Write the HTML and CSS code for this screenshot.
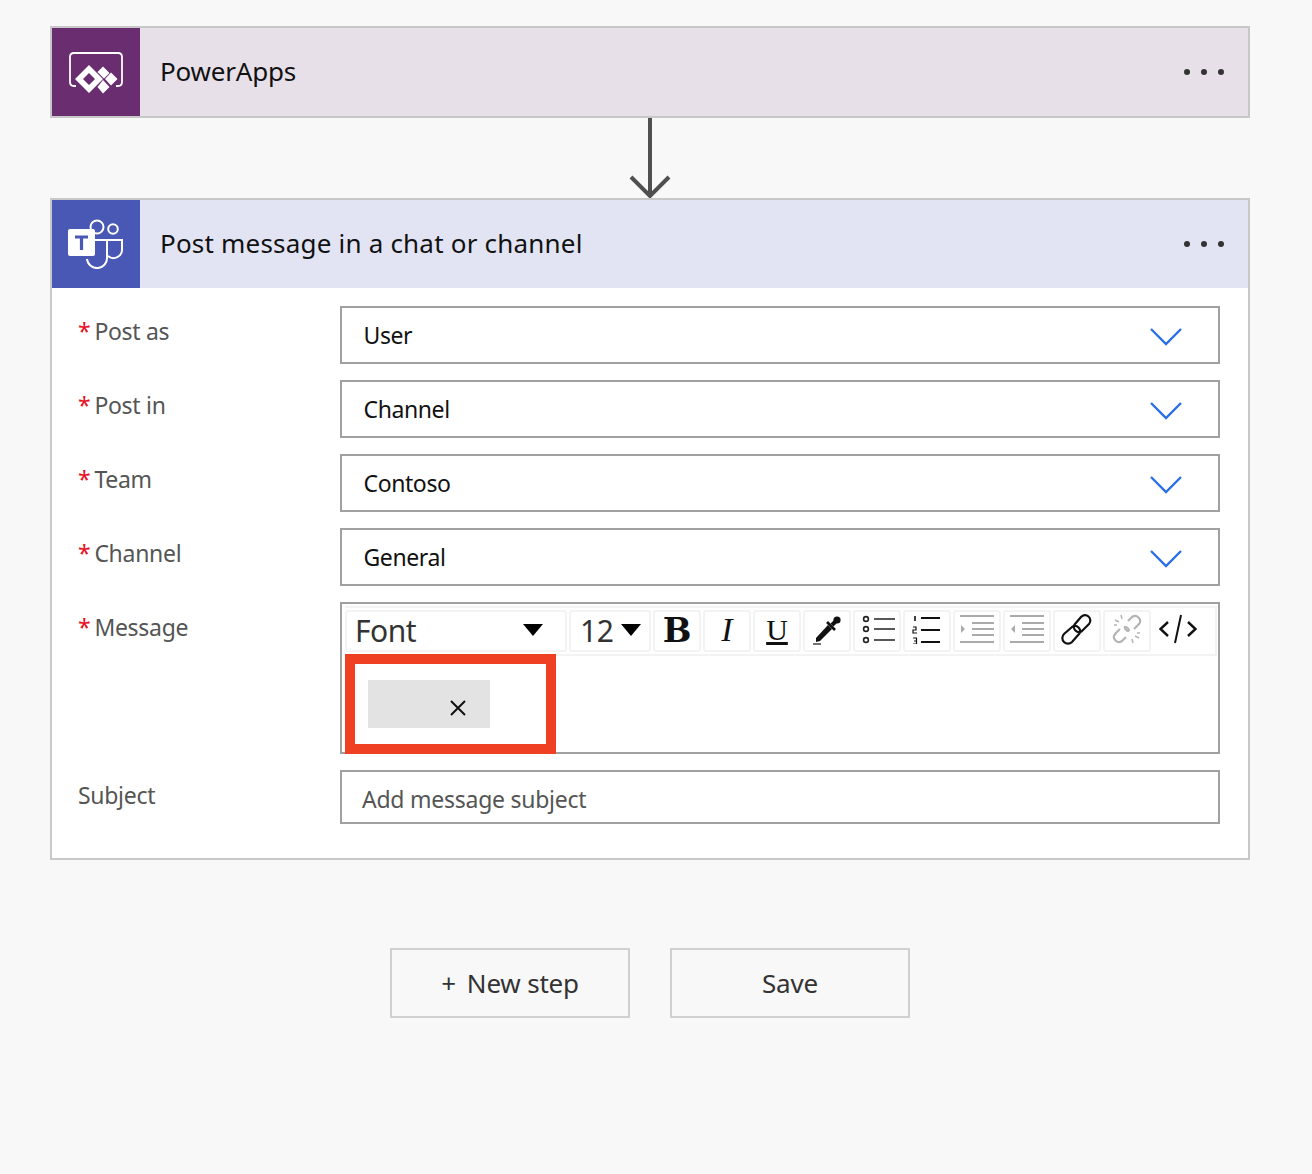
FILE: index.html
```html
<!DOCTYPE html>
<html lang="en">
<head>
    <meta charset="UTF-8">
    <title>Flow editor</title>
    <link rel="stylesheet" href="styles.css">
</head>
<body>
    <div class="flow">
        <div class="card card-trigger">
            <div class="card-header">
                <div class="card-icon">
                    <svg width="58" height="44" viewBox="0 0 58 44" fill="none">
                        <path d="M9 36 H7 Q3 36 3 32 V7 Q3 3 7 3 H51 Q55 3 55 7 V32 Q55 36 51 36 H49" stroke="#fff" stroke-width="1.8"/>
                        <path d="M22 15 L36 29 L22 43 L8 29 Z M22 23 L16 29 L22 35 L28 29 Z" fill="#fff" fill-rule="evenodd"/>
                        <path d="M36 16.5 L42.5 23 L37 28.5 L30.5 22 Z M44 22.5 L50.5 29 L44 35.5 L38 29 Z M36 30 L42.5 37 L36 43.5 L30.5 37 Z" fill="#fff"/>
                    </svg>
                </div>
                <div class="card-title">PowerApps</div>
                <div class="dots"><span></span><span></span><span></span></div>
            </div>
        </div>

        <div class="arrow">
            <svg width="42" height="80" viewBox="0 0 42 80" fill="none">
                <path d="M21 0 V78 M2 59 L21 78 L40 59" stroke="#505050" stroke-width="4"/>
            </svg>
        </div>

        <div class="card card-action">
            <div class="card-header">
                <div class="card-icon">
                    <svg width="58" height="50" viewBox="0 0 58 50" fill="none">
                        <circle cx="30" cy="8" r="6.5" stroke="#fff" stroke-width="2"/>
                        <circle cx="46" cy="10" r="4.8" stroke="#fff" stroke-width="2"/>
                        <path d="M28 21 H40 V38 A10 10 0 0 1 20 40" stroke="#fff" stroke-width="2"/>
                        <path d="M40 21 H55 V30 A8.5 8.5 0 0 1 41 37" stroke="#fff" stroke-width="2"/>
                        <rect x="1" y="10" width="27" height="27" rx="2" fill="#fff"/>
                        <path d="M8 18 H21 M14.5 18 V31" stroke="#4858b4" stroke-width="3.2"/>
                    </svg>
                </div>
                <div class="card-title">Post message in a chat or channel</div>
                <div class="dots"><span></span><span></span><span></span></div>
            </div>
            <div class="card-body">
                <div class="row">
                    <label class="row-label"><span class="req">*</span>Post as</label>
                    <div class="select"><span>User</span><svg class="chevron" width="32" height="20" viewBox="0 0 32 20"><path d="M1 2 L16 17 L31 2" fill="none" stroke="#2a6fe8" stroke-width="2.4"/></svg></div>
                </div>
                <div class="row">
                    <label class="row-label"><span class="req">*</span>Post in</label>
                    <div class="select"><span>Channel</span><svg class="chevron" width="32" height="20" viewBox="0 0 32 20"><path d="M1 2 L16 17 L31 2" fill="none" stroke="#2a6fe8" stroke-width="2.4"/></svg></div>
                </div>
                <div class="row">
                    <label class="row-label"><span class="req">*</span>Team</label>
                    <div class="select"><span>Contoso</span><svg class="chevron" width="32" height="20" viewBox="0 0 32 20"><path d="M1 2 L16 17 L31 2" fill="none" stroke="#2a6fe8" stroke-width="2.4"/></svg></div>
                </div>
                <div class="row">
                    <label class="row-label"><span class="req">*</span>Channel</label>
                    <div class="select"><span>General</span><svg class="chevron" width="32" height="20" viewBox="0 0 32 20"><path d="M1 2 L16 17 L31 2" fill="none" stroke="#2a6fe8" stroke-width="2.4"/></svg></div>
                </div>
                <div class="row">
                    <label class="row-label"><span class="req">*</span>Message</label>
                    <div class="editor">
                        <div class="toolbar">
                            <div class="tool tool-font"><span>Font</span><i class="caret"></i></div>
                            <div class="tool tool-size"><span>12</span><i class="caret"></i></div>
                            <div class="tool tool-bold">B</div>
                            <div class="tool tool-italic">I</div>
                            <div class="tool tool-under">U</div>
                            <div class="tool">
                                <svg width="32" height="32" viewBox="0 0 32 32">
                                    <path d="M5 25 L17 12 L21 16 L9 28 L5 29 Z" fill="#111"/>
                                    <path d="M16 9 L24 17" stroke="#111" stroke-width="2.6"/>
                                    <path d="M21 12 L25 8" stroke="#111" stroke-width="4"/>
                                    <circle cx="26" cy="7" r="3.6" fill="#111"/>
                                    <path d="M2 31 H10" stroke="#444" stroke-width="1.5"/>
                                </svg>
                            </div>
                            <div class="tool">
                                <svg class="icon-list" width="34" height="30" viewBox="0 0 34 30" fill="none" stroke="#222">
                                    <circle cx="4" cy="5" r="2.4" stroke-width="1.6"/>
                                    <circle cx="4" cy="15" r="2.4" stroke-width="1.6"/>
                                    <circle cx="4" cy="26" r="2.4" stroke-width="1.6"/>
                                    <path d="M12 5 H33 M12 15 H33 M12 26 H33" stroke-width="1.5"/>
                                </svg>
                            </div>
                            <div class="tool">
                                <svg width="30" height="30" viewBox="0 0 30 30" fill="none" stroke="#111">
                                    <path d="M3 2 V7" stroke-width="1.6"/>
                                    <path d="M1 13 H4 V16 H1 V19 H5 M1 24 H4.5 V30 H1 M2 27 H4.5" stroke-width="1.2"/>
                                    <path d="M9 4 H28 M9 16 H28 M9 28 H28" stroke-width="2.2"/>
                                </svg>
                            </div>
                            <div class="tool">
                                <svg width="36" height="30" viewBox="0 0 36 30" fill="none" stroke="#aaa" stroke-width="2">
                                    <path d="M1 2 H35 M13 9 H35 M13 15 H35 M13 21 H35 M1 28 H35"/>
                                    <path d="M2 11 L6 15 L2 19 Z" fill="#aaa" stroke="none"/>
                                </svg>
                            </div>
                            <div class="tool">
                                <svg width="36" height="30" viewBox="0 0 36 30" fill="none" stroke="#aaa" stroke-width="2">
                                    <path d="M1 2 H35 M13 9 H35 M13 15 H35 M13 21 H35 M1 28 H35"/>
                                    <path d="M6 11 L2 15 L6 19 Z" fill="#aaa" stroke="none"/>
                                </svg>
                            </div>
                            <div class="tool">
                                <svg width="32" height="32" viewBox="0 0 32 32" fill="none" stroke="#111" stroke-width="2.2">
                                    <path d="M14 11 L20 4 A5 5 0 0 1 28 11 L21 18 A5 5 0 0 1 14 11 Z"/>
                                    <path d="M3 21 L11 14 A5 5 0 0 1 18 21 L11 29 A5 5 0 0 1 3 21 Z"/>
                                </svg>
                            </div>
                            <div class="tool">
                                <svg width="32" height="32" viewBox="0 0 32 32" fill="none" stroke="#b4b4b4" stroke-width="2.2">
                                    <path d="M17 8 L21 4 A5 5 0 0 1 28 11 L23 16 M18 18 A4 4 0 0 1 14 13"/>
                                    <path d="M15 24 L11 28 A5 5 0 0 1 4 21 L9 16 M14 14 A4 4 0 0 1 18 18"/>
                                    <path d="M10 2 L11 6 M4 7 L8 9 M3 12 H6 M22 30 L21 26 M28 25 L24 23 M29 20 H26" stroke-width="1.5"/>
                                </svg>
                            </div>
                            <div class="tool tool-plain">
                                <svg width="38" height="32" viewBox="0 0 38 32" fill="none" stroke="#111" stroke-width="2.4">
                                    <path d="M9 9 L1.5 16 L9 23 M29 9 L36.5 16 L29 23"/>
                                    <path d="M22 2 L16 30" stroke-width="2"/>
                                </svg>
                            </div>
                        </div>
                        <div class="editor-content">
                            <div class="chip">
                                <svg width="18" height="18" viewBox="0 0 18 18"><path d="M2 2 L16 16 M16 2 L2 16" stroke="#111" stroke-width="2"/></svg>
                            </div>
                        </div>
                        <div class="highlight"></div>
                    </div>
                </div>
                <div class="row">
                    <label class="row-label">Subject</label>
                    <div class="text-input"><span>Add message subject</span></div>
                </div>
            </div>
        </div>

        <div class="actions">
            <button class="btn"><span class="plus">+</span>New step</button>
            <button class="btn">Save</button>
        </div>
    </div>
</body>
</html>
```

FILE: styles.css
```css
* {
    box-sizing: border-box;
}
body {
    margin: 0;
    height: 1174px;
    background-color: #f8f8f8;
    font-family: "Noto Sans", "Open Sans", sans-serif;
    color: #111;
    overflow: hidden;
}
.flow {
    width: 1200px;
    margin-left: 50px;
    padding-top: 26px;
}
.card {
    border: 2px solid #c8c8c8;
}
.card-header {
    display: flex;
    align-items: center;
    height: 88px;
}
.card-trigger .card-header {
    background-color: #e7e0e8;
}
.card-action .card-header {
    background-color: #e2e4f3;
}
.card-icon {
    width: 88px;
    height: 88px;
    display: flex;
    align-items: center;
    justify-content: center;
    flex-shrink: 0;
}
.card-trigger .card-icon {
    background-color: #6a2d70;
}
.card-action .card-icon {
    background-color: #4858b4;
}
.card-title {
    flex: 1;
    margin: -2px 0 0 20px;
    font-size: 26px;
    letter-spacing: 0.2px;
}
.card-trigger .card-title {
    letter-spacing: -0.2px;
}
.dots {
    display: flex;
    gap: 11px;
    margin-right: 24px;
}
.dots span {
    width: 6px;
    height: 6px;
    border-radius: 50%;
    background-color: #333;
}
.arrow {
    height: 80px;
    display: flex;
    justify-content: center;
}
.card-body {
    background: white;
    padding: 18px 28px 34px 26px;
    display: flex;
    flex-direction: column;
    gap: 16px;
}
.row {
    display: flex;
    align-items: flex-start;
}
.row-label {
    width: 262px;
    flex-shrink: 0;
    padding-top: 9px;
    font-size: 23px;
    color: #555;
    letter-spacing: -0.3px;
}
.req {
    color: #e81123;
    margin: 0 4px 0 0;
}
.select {
    flex: 1;
    height: 58px;
    border: 2px solid #a0a0a0;
    display: flex;
    align-items: center;
    justify-content: space-between;
    padding: 0 36px 0 21.5px;
    font-size: 23px;
    letter-spacing: -0.4px;
}
.chevron {
    display: block;
    margin-top: 3px;
}
.editor {
    position: relative;
    flex: 1;
    height: 152px;
    border: 2px solid #a0a0a0;
}
.toolbar {
    display: flex;
    gap: 2px;
    height: 50px;
    width: 872px;
    margin: 2px 0 0 3px;
    padding: 2px 0;
    background: white;
    border-top: 2px solid #f3f3f3;
    border-bottom: 2px solid #f3f3f3;
    border-right: 2px solid #f3f3f3;
}
.tool {
    width: 48px;
    height: 42px;
    background: white;
    border: 2px solid #f3f3f3;
    border-radius: 3px;
    display: flex;
    align-items: center;
    justify-content: center;
    color: #111;
}
.tool svg {
    margin-top: -4px;
}
.tool .icon-list {
    margin-left: 3px;
}
.tool-font {
    width: 222px;
    justify-content: space-between;
    padding: 0 22px 2px 8px;
    font-size: 30px;
    color: #333;
    letter-spacing: -0.5px;
}
.tool-size {
    width: 82px;
    justify-content: space-between;
    padding: 0 8px 2px 9px;
    font-size: 30px;
    color: #333;
    letter-spacing: -0.5px;
}
.caret {
    width: 0;
    height: 0;
    border-left: 10px solid transparent;
    border-right: 10px solid transparent;
    border-top: 12px solid #000;
}
.tool-bold {
    font-family: "DejaVu Serif", serif;
    font-weight: bold;
    font-size: 34px;
    padding-bottom: 3px;
}
.tool-italic {
    font-family: "Liberation Serif", serif;
    font-style: italic;
    font-size: 34px;
    padding-bottom: 3px;
}
.tool-under {
    font-family: "Liberation Serif", serif;
    font-size: 30px;
    text-decoration: underline;
    padding-bottom: 3px;
}
.tool-plain {
    border-color: white;
    width: 50px;
}
.editor-content {
    height: 96px;
    padding: 24px 0 0 26px;
}
.chip {
    width: 122px;
    height: 48px;
    background-color: #e3e3e3;
    display: flex;
    align-items: center;
    justify-content: flex-end;
    padding: 7px 23px 0 0;
}
.highlight {
    position: absolute;
    left: 3px;
    top: 50px;
    width: 211px;
    height: 100px;
    border: 10px solid #ef4023;
}
.text-input {
    flex: 1;
    height: 54px;
    border: 2px solid #a0a0a0;
    display: flex;
    align-items: center;
    padding: 4px 0 0 20px;
    font-size: 23px;
    color: #555;
    letter-spacing: -0.25px;
}
.actions {
    display: flex;
    justify-content: center;
    gap: 40px;
    margin-top: 88px;
}
.btn {
    width: 240px;
    height: 70px;
    background: transparent;
    border: 2px solid #d0d0d0;
    font-family: inherit;
    font-size: 26px;
    color: #333;
    letter-spacing: -0.2px;
}
.plus {
    margin-right: 11px;
}
```
